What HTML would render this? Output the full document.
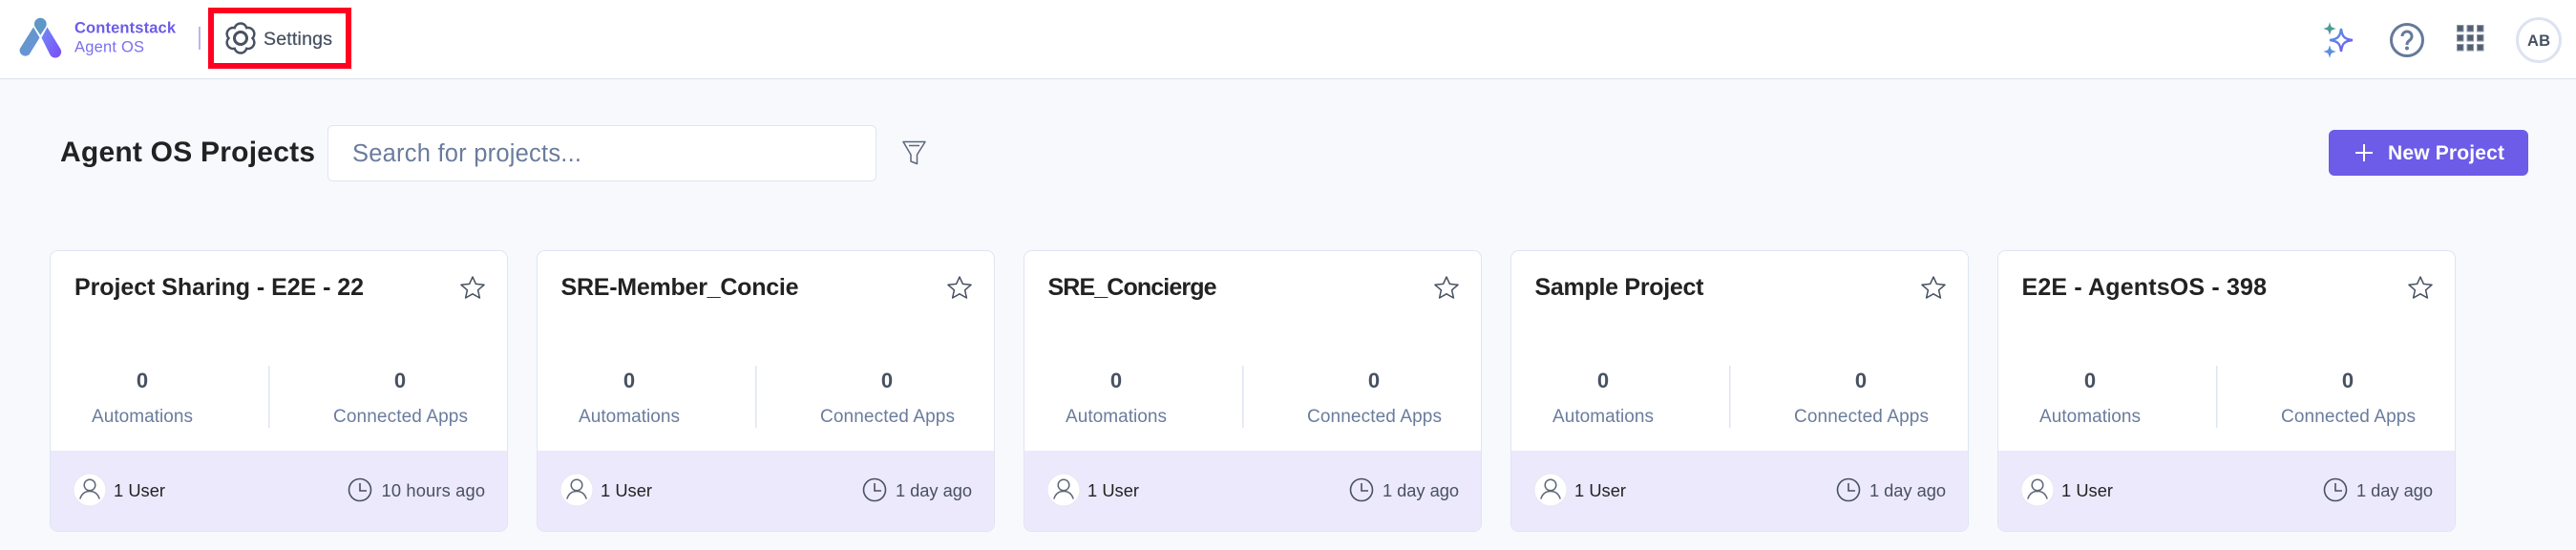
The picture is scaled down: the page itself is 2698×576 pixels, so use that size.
<!DOCTYPE html>
<html lang="en">
<head>
<meta charset="utf-8">
<title>Agent OS Projects</title>
<style>
html,body{margin:0;padding:0;width:2698px;height:576px;overflow:hidden;background:#f7f9fd}
svg{display:block}
text{font-family:"Liberation Sans",sans-serif}
.t{font-size:25px;font-weight:700;fill:#222222}
.z{font-size:22px;font-weight:700;fill:#475161}
.l{font-size:19px;fill:#6a7c9c}
.u{font-size:18.3px;fill:#222222}
.a{font-size:18.3px;fill:#475161}
</style>
</head>
<body>
<svg width="2698" height="576" viewBox="0 0 2698 576" xmlns="http://www.w3.org/2000/svg">
<defs>
<linearGradient id="lg1" x1="0" y1="0" x2="1" y2="1"><stop offset="0" stop-color="#5f9ac0"/><stop offset="1" stop-color="#6c90e0"/></linearGradient>
<linearGradient id="lg2" x1="0" y1="0" x2="1" y2="1"><stop offset="0" stop-color="#6f8cf8"/><stop offset="1" stop-color="#7c4cf5"/></linearGradient>
<linearGradient id="lg3" x1="0" y1="0" x2="1" y2="1"><stop offset="0" stop-color="#4f9fe0"/><stop offset="1" stop-color="#7a4ff5"/></linearGradient>
<g id="card">
<rect x="52.5" y="262.5" width="479" height="294" rx="8" fill="#ffffff" stroke="#dfe5f1"/>
<path d="M53 472H531V549a7 7 0 0 1-7 7H60a7 7 0 0 1-7-7Z" fill="#ede9fd"/>
<path d="M495 290L498.4 297.4 507 298.3 500.6 303.8 502.4 312 495 307.8 487.6 312 489.4 303.8 483 298.3 491.6 297.4Z" fill="none" stroke="#475161" stroke-width="1.5" stroke-linejoin="round"/>
<rect x="281" y="383" width="1.5" height="65" fill="#dfe5f1"/>
<circle cx="94" cy="513" r="17" fill="#ffffff" stroke="#e4e8f1"/>
<circle cx="94" cy="508" r="5.8" fill="none" stroke="#5d6779" stroke-width="1.5"/>
<path d="M84 522C86 516 90 514.500 94 514.500C98 514.500 102 516 104 522" fill="none" stroke="#5d6779" stroke-width="1.5" stroke-linecap="round"/>
</g>
<g id="clock">
<circle cx="0" cy="0" r="11.500" fill="none" stroke="#475161" stroke-width="1.600"/>
<path d="M0-7V1H7" fill="none" stroke="#475161" stroke-width="1.600"/>
</g>
</defs>

<rect width="2698" height="576" fill="#f7f9fd"/>
<rect width="2698" height="82" fill="#ffffff"/>
<rect y="82" width="2698" height="1" fill="#dde3ee"/>

<path d="M35 28.500L41.500 39.500 30.700 57A6 6 0 0 1 20.800 51Z" fill="url(#lg1)"/>
<path d="M49.500 28.500L63.200 51A6 6 0 0 1 52.500 57.500L43.500 39.500Z" fill="url(#lg2)"/>
<path d="M42.300 18.700A6.500 6.500 0 0 1 47.800 28.500L42.300 36.800 36.800 28.500A6.500 6.500 0 0 1 42.300 18.700Z" fill="#5f97c7"/>
<text x="78" y="34.500" font-size="16.500" font-weight="700" fill="#6c5ce7" textLength="106">Contentstack</text>
<text x="78" y="54.500" font-size="16.500" fill="#7c6ff0" textLength="73">Agent OS</text>
<rect x="208" y="28" width="2" height="24" fill="#bdb5f0"/>

<rect x="221" y="11" width="144" height="58" fill="#ffffff" stroke="#ff0022" stroke-width="6"/>
<g transform="translate(252 40)" fill="none" stroke="#475161">
<path d="M12.500 0A6.500 6.500 0 0 1 6.250 10.830A6.500 6.500 0 0 1-6.250 10.830A6.500 6.500 0 0 1-12.500 0A6.500 6.500 0 0 1-6.250-10.830A6.500 6.500 0 0 1 6.250-10.830A6.500 6.500 0 0 1 12.500 0Z" stroke-width="2.500"/>
<circle r="6.500" stroke-width="3"/>
</g>
<text x="276" y="47" font-size="19.500" fill="#475161" stroke="#475161" stroke-width=".25" textLength="72">Settings</text>

<path d="M2452 30C2453 38.500 2455.500 41 2464 42C2455.500 43 2453 45.500 2452 54C2451 45.500 2448.500 43 2440 42C2448.500 41 2451 38.500 2452 30Z" fill="none" stroke="url(#lg3)" stroke-width="2.400"/>
<path d="M2440 25C2441 28.500 2441.500 29 2445 30C2441.500 31 2441 31.500 2440 35C2439 31.500 2438.500 31 2435 30C2438.500 29 2439 28.500 2440 25Z" fill="#4f9a96" stroke="#4f9a96"/>
<path d="M2440 49C2441 52.500 2441.500 53 2445 54C2441.500 55 2441 55.500 2440 59C2439 55.500 2438.500 55 2435 54C2438.500 53 2439 52.500 2440 49Z" fill="#5d8fe0" stroke="#5d8fe0"/>

<circle cx="2521" cy="42" r="16.500" fill="none" stroke="#667a99" stroke-width="3"/>
<path d="M2516 38A5 5 0 1 1 2524 42C2522 43.500 2521 44.500 2521 47" fill="none" stroke="#667a99" stroke-width="3"/>
<circle cx="2521" cy="50.500" r="2" fill="#667a99"/>

<g fill="#545f72" stroke="#8e97a6">
<rect x="2573.500" y="26.500" width="6.500" height="6.500"/><rect x="2584" y="26.500" width="6.500" height="6.500"/><rect x="2594.500" y="26.500" width="6.500" height="6.500"/>
<rect x="2573.500" y="36.500" width="6.500" height="6.500"/><rect x="2584" y="36.500" width="6.500" height="6.500"/><rect x="2594.500" y="36.500" width="6.500" height="6.500"/>
<rect x="2573.500" y="46.500" width="6.500" height="6.500"/><rect x="2584" y="46.500" width="6.500" height="6.500"/><rect x="2594.500" y="46.500" width="6.500" height="6.500"/>
</g>

<circle cx="2659" cy="42" r="22.500" fill="#ffffff" stroke="#dde3f0" stroke-width="3"/>
<text x="2647" y="48" font-size="16.500" font-weight="700" fill="#475161" textLength="24">AB</text>

<text x="63" y="169" font-size="30" font-weight="700" fill="#222222" textLength="267">Agent OS Projects</text>
<rect x="343.500" y="131.500" width="574" height="58" rx="5" fill="#ffffff" stroke="#dfe5f1"/>
<text x="369" y="169" font-size="25.500" fill="#6a7c9c" textLength="240">Search for projects...</text>
<path d="M946 148.500H969L960.500 162V171.500L954 169V162Z" fill="none" stroke="#5d6779" stroke-width="1.500" stroke-linejoin="round"/>
<path d="M952 152.500H963" fill="none" stroke="#5d6779" stroke-width="1.500"/>

<rect x="2439" y="136" width="209" height="48" rx="6" fill="#6c5ce7"/>
<path d="M2476 151V169M2467 160H2485" stroke="#ffffff" stroke-width="2" fill="none"/>
<text x="2501" y="167" font-size="21" font-weight="700" fill="#ffffff" textLength="122">New Project</text>

<g>
<use href="#card"/>
<use href="#clock" x="377" y="513"/>
<text class="t" x="78" y="309" textLength="303">Project Sharing - E2E - 22</text>
<text class="z" x="149" y="406" text-anchor="middle">0</text>
<text class="z" x="419" y="406" text-anchor="middle">0</text>
<text class="l" x="96" y="442" textLength="106">Automations</text>
<text class="l" x="349" y="442" textLength="141">Connected Apps</text>
<text class="u" x="119" y="520" textLength="54">1 User</text>
<text class="a" x="399.500" y="520" textLength="108.500">10 hours ago</text>
</g>

<g transform="translate(510 0)">
<use href="#card"/>
<use href="#clock" x="406" y="513"/>
<text class="t" x="77.500" y="309" textLength="249">SRE-Member_Concie</text>
<text class="z" x="149" y="406" text-anchor="middle">0</text>
<text class="z" x="419" y="406" text-anchor="middle">0</text>
<text class="l" x="96" y="442" textLength="106">Automations</text>
<text class="l" x="349" y="442" textLength="141">Connected Apps</text>
<text class="u" x="119" y="520" textLength="54">1 User</text>
<text class="a" x="428" y="520" textLength="80">1 day ago</text>
</g>

<g transform="translate(1020 0)">
<use href="#card"/>
<use href="#clock" x="406" y="513"/>
<text class="t" x="77.500" y="309" textLength="177">SRE_Concierge</text>
<text class="z" x="149" y="406" text-anchor="middle">0</text>
<text class="z" x="419" y="406" text-anchor="middle">0</text>
<text class="l" x="96" y="442" textLength="106">Automations</text>
<text class="l" x="349" y="442" textLength="141">Connected Apps</text>
<text class="u" x="119" y="520" textLength="54">1 User</text>
<text class="a" x="428" y="520" textLength="80">1 day ago</text>
</g>

<g transform="translate(1530 0)">
<use href="#card"/>
<use href="#clock" x="406" y="513"/>
<text class="t" x="77.500" y="309" textLength="177">Sample Project</text>
<text class="z" x="149" y="406" text-anchor="middle">0</text>
<text class="z" x="419" y="406" text-anchor="middle">0</text>
<text class="l" x="96" y="442" textLength="106">Automations</text>
<text class="l" x="349" y="442" textLength="141">Connected Apps</text>
<text class="u" x="119" y="520" textLength="54">1 User</text>
<text class="a" x="428" y="520" textLength="80">1 day ago</text>
</g>

<g transform="translate(2040 0)">
<use href="#card"/>
<use href="#clock" x="406" y="513"/>
<text class="t" x="77.500" y="309" textLength="256.500">E2E - AgentsOS - 398</text>
<text class="z" x="149" y="406" text-anchor="middle">0</text>
<text class="z" x="419" y="406" text-anchor="middle">0</text>
<text class="l" x="96" y="442" textLength="106">Automations</text>
<text class="l" x="349" y="442" textLength="141">Connected Apps</text>
<text class="u" x="119" y="520" textLength="54">1 User</text>
<text class="a" x="428" y="520" textLength="80">1 day ago</text>
</g>
</svg>
</body>
</html>
